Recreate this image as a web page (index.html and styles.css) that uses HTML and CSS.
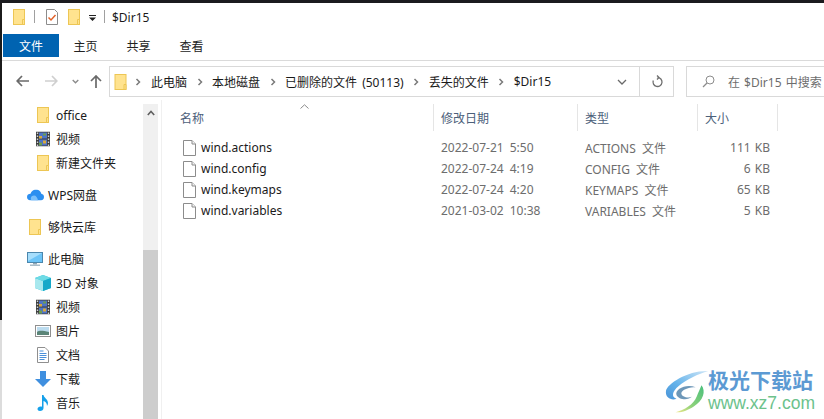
FILE: index.html
```html
<!DOCTYPE html>
<html lang="zh-CN">
<head>
<meta charset="utf-8">
<title>$Dir15</title>
<link rel="stylesheet" href="styles.css">
</head>
<body>
<svg class="defs" width="0" height="0" aria-hidden="true">
  <defs>
    <symbol id="folder" viewBox="0 0 12 16">
      <rect x=".5" y=".5" width="11" height="15" fill="#ffe38f" stroke="#edc654"/>
      <path d="M9.5 10.5h2v5h-2z" fill="#ffe38f" stroke="#edc654"/>
    </symbol>
    <symbol id="film" viewBox="0 0 14 15">
      <rect width="14" height="15" fill="#3d3d3d"/>
      <path d="M.8 1h1.4v1.6H.8zM.8 4h1.4v1.6H.8zM.8 7h1.4v1.6H.8zM.8 10h1.4v1.6H.8zM.8 13h1.4v1.4H.8zM11.8 1h1.4v1.6h-1.4zM11.8 4h1.4v1.6h-1.4zM11.8 7h1.4v1.6h-1.4zM11.8 10h1.4v1.6h-1.4zM11.8 13h1.4v1.4h-1.4z" fill="#cfd3d6"/>
      <rect x="3" y="1" width="8" height="6" fill="#4f74c8"/>
      <rect x="3" y="8" width="8" height="6" fill="#4f74c8"/>
      <path d="M3 4.500h3v2.500H3zM7 9h3v3H7z" fill="#d9a93a"/>
      <path d="M7 2h3v2H7zM3 11h3v3H3z" fill="#6d9e4f"/>
    </symbol>
    <symbol id="cloud" viewBox="0 0 17 11">
      <path d="M4 11C1.500 11 0 9.500 0 7.500S1.500 4.300 3.500 4.300C4.300 1.700 6.500 0 9 0c2.800 0 4.800 1.800 5.300 4.300C16 4.600 17 5.900 17 7.500 17 9.500 15.500 11 13.500 11z" fill="#2c8ff0"/>
      <path d="M4.500 11C3 9 4 6 7 6c2 0 3.500 2 4 5z" fill="#7cc0fa"/>
    </symbol>
    <symbol id="pc" viewBox="0 0 16 14">
      <rect x=".5" y=".5" width="15" height="10" fill="#6cc4f7" stroke="#4b87ad"/>
      <path d="M1 1h14L1 9z" fill="#a6defc"/>
      <rect x="6" y="11" width="4" height="1.500" fill="#8fa6b5"/>
      <rect x="3" y="12.500" width="10" height="1.500" fill="#a9bcc8"/>
    </symbol>
    <symbol id="cube" viewBox="0 0 16 16">
      <path d="M8 0l8 3v10l-8 3-8-3V3z" fill="#2cc0d8"/>
      <path d="M0 3l8 3v10l-8-3z" fill="#a8e8ee"/>
      <path d="M8 0l8 3-8 3-8-3z" fill="#6fdbe5"/>
      <path d="M8 6l8-3v10l-8 3z" fill="#17a9c9"/>
    </symbol>
    <symbol id="pic" viewBox="0 0 16 12">
      <rect x=".5" y=".5" width="15" height="11" fill="#fff" stroke="#8f8f8f"/>
      <rect x="2" y="2" width="12" height="8" fill="#bcdcef"/>
      <path d="M2 7c3-2 6-1 12 0v3H2z" fill="#5b8578"/>
    </symbol>
    <symbol id="doc" viewBox="0 0 12 16">
      <path d="M.5.500h7.500l3.500 3.500v11.500H.5z" fill="#fff" stroke="#8f8f8f"/>
      <path d="M2.500 4h4M2.500 6.500h7M2.500 8.500h7M2.500 10.500h7M2.500 12.500h5" stroke="#4a90d9" fill="none"/>
    </symbol>
    <symbol id="down" viewBox="0 0 16 16">
      <path d="M5 0h6v8h5l-8 8-8-8h5z" fill="#3f8fdf"/>
    </symbol>
    <symbol id="note" viewBox="0 0 12 16">
      <path d="M5 0h1.500c.5 3 4.500 4 4.500 8 0 1-.3 2-1 3 .2-3-2-4.500-3.500-5v7c0 2-1.500 3-3.500 3C1.500 16 .5 15 .5 14c0-1.500 1.500-2.500 3-2.500.6 0 1 .1 1.500.3z" fill="#15a0ea"/>
    </symbol>
    <symbol id="file" viewBox="0 0 13 16">
      <path d="M.5.500h8.500l3.500 3.500v11.500H.5z" fill="#fff" stroke="#8c8c8c"/>
      <path d="M9 .5v3.500h3.500" fill="#f3f3f3" stroke="#8c8c8c"/>
    </symbol>
    <symbol id="crumb" viewBox="0 0 6 8">
      <path d="M1.500 1l3 3-3 3" fill="none" stroke="#7a7a7a" stroke-width="1.500"/>
    </symbol>
  </defs>
</svg>

<div class="frame">
  <div class="edge"><div class="edge-dark"></div><div class="edge-light"></div></div>
  <div class="window">
    <header class="titlebar">
      <svg class="ic-folder"><use href="#folder"/></svg>
      <span class="qsep"></span>
      <svg class="ic-check" viewBox="0 0 12 16">
        <path d="M.5.500h8l3 3v12H.5z" fill="#fff" stroke="#8c8c8c"/>
        <path d="M2.500 8.500l2.500 2.500 4.500-5" fill="none" stroke="#e2622a" stroke-width="1.500"/>
      </svg>
      <svg class="ic-folder second"><use href="#folder"/></svg>
      <svg class="ic-qat" viewBox="0 0 7 6"><path d="M0 0h7v1H0zM0 2.500h7L3.500 6z" fill="#222"/></svg>
      <span class="qsep tight"></span>
      <span class="wintitle">$Dir15</span>
    </header>

    <nav class="tabs">
      <span class="tab tab-file">文件</span>
      <span class="tab">主页</span>
      <span class="tab">共享</span>
      <span class="tab">查看</span>
    </nav>

    <div class="addrrow">
      <svg class="nav-back" viewBox="0 0 13 12"><path d="M6 1L1.200 6 6 11M1.500 6H13" fill="none" stroke="#6a6a6a" stroke-width="1.700"/></svg>
      <svg class="nav-fwd" viewBox="0 0 13 12"><path d="M7 1l4.800 5L7 11M11.500 6H0" fill="none" stroke="#cfcfcf" stroke-width="1.700"/></svg>
      <svg class="nav-drop" viewBox="0 0 7 5"><path d="M.7 1l2.800 2.800L6.300 1" fill="none" stroke="#8a8a8a" stroke-width="1.300"/></svg>
      <svg class="nav-up" viewBox="0 0 12 13"><path d="M1 6l5-5 5 5M6 1.500V13" fill="none" stroke="#6a6a6a" stroke-width="1.700"/></svg>
      <div class="addrbox">
        <svg class="ic-addr"><use href="#folder"/></svg>
        <svg class="crumb first"><use href="#crumb"/></svg>
        <span>此电脑</span>
        <svg class="crumb"><use href="#crumb"/></svg>
        <span>本地磁盘</span>
        <svg class="crumb"><use href="#crumb"/></svg>
        <span>已删除的文件 (50113)</span>
        <svg class="crumb"><use href="#crumb"/></svg>
        <span>丢失的文件</span>
        <svg class="crumb"><use href="#crumb"/></svg>
        <span>$Dir15</span>
        <svg class="addr-drop" viewBox="0 0 10 6"><path d="M1 1l4 4 4-4" fill="none" stroke="#6a6a6a" stroke-width="1.300"/></svg>
        <div class="refresh">
          <svg class="ic-refresh" viewBox="0 0 12 13"><path d="M6.500 2.500A4.500 4.500 0 1 1 2.300 5.400M6 .5l2 2-2 2" fill="none" stroke="#6e6e6e" stroke-width="1.300"/></svg>
        </div>
      </div>
      <div class="searchbox">
        <svg class="ic-search" viewBox="0 0 13 13"><circle cx="8" cy="5" r="4" fill="none" stroke="#8c8c8c"/><path d="M5 8l-4 4" stroke="#8c8c8c" stroke-width="1.200"/></svg>
        <span class="searchtext">在 $Dir15 中搜索</span>
      </div>
    </div>

    <main class="body">
      <aside class="sidebar">
        <ul class="tree">
          <li class="node sub"><svg class="i12"><use href="#folder"/></svg>office</li>
          <li class="node sub"><svg class="i14"><use href="#film"/></svg>视频</li>
          <li class="node sub"><svg class="i12"><use href="#folder"/></svg>新建文件夹</li>
          <li class="node top gap"><svg class="i-cloud"><use href="#cloud"/></svg>WPS网盘</li>
          <li class="node top gap"><svg class="i12"><use href="#folder"/></svg>够快云库</li>
          <li class="node top gap"><svg class="i-pc"><use href="#pc"/></svg>此电脑</li>
          <li class="node sub"><svg class="i16"><use href="#cube"/></svg>3D 对象</li>
          <li class="node sub"><svg class="i14"><use href="#film"/></svg>视频</li>
          <li class="node sub"><svg class="i-pic"><use href="#pic"/></svg>图片</li>
          <li class="node sub"><svg class="i12"><use href="#doc"/></svg>文档</li>
          <li class="node sub"><svg class="i16"><use href="#down"/></svg>下载</li>
          <li class="node sub"><svg class="i12"><use href="#note"/></svg>音乐</li>
        </ul>
        <div class="scrollbar">
          <div class="track"><svg class="scroll-up" viewBox="0 0 8 6"><path d="M.8 5L4 1.500 7.200 5" fill="none" stroke="#606060" stroke-width="1.600"/></svg></div>
          <div class="thumb"></div>
        </div>
      </aside>
      <section class="files">
        <div class="colhead">
          <span class="cell name">名称<svg class="sort" viewBox="0 0 9 5"><path d="M.5 4.500L4.500.8l4 3.700" fill="none" stroke="#8a8a8a"/></svg></span>
          <span class="cell">修改日期</span>
          <span class="cell">类型</span>
          <span class="cell">大小</span>
          <span class="cell tail"></span>
        </div>
        <div class="row">
          <span class="fname"><svg class="ic-file"><use href="#file"/></svg>wind.actions</span>
          <span class="meta">2022-07-21 5:50</span><span class="meta">ACTIONS 文件</span><span class="meta size">111 KB</span>
        </div>
        <div class="row">
          <span class="fname"><svg class="ic-file"><use href="#file"/></svg>wind.config</span>
          <span class="meta">2022-07-24 4:19</span><span class="meta">CONFIG 文件</span><span class="meta size">6 KB</span>
        </div>
        <div class="row">
          <span class="fname"><svg class="ic-file"><use href="#file"/></svg>wind.keymaps</span>
          <span class="meta">2022-07-24 4:20</span><span class="meta">KEYMAPS 文件</span><span class="meta size">65 KB</span>
        </div>
        <div class="row">
          <span class="fname"><svg class="ic-file"><use href="#file"/></svg>wind.variables</span>
          <span class="meta">2021-03-02 10:38</span><span class="meta">VARIABLES 文件</span><span class="meta size">5 KB</span>
        </div>
      </section>
    </main>
  </div>
</div>

<div class="watermark">
  <svg class="wm-logo" viewBox="0 0 48 48">
    <defs>
      <linearGradient id="wmblue" x1="1" y1="0" x2="0" y2="1"><stop offset="0" stop-color="#cfe6f7"/><stop offset=".6" stop-color="#63b2ea"/><stop offset="1" stop-color="#4a94d8"/></linearGradient>
      <linearGradient id="wmgreen" x1="1" y1="0" x2="0" y2="1"><stop offset="0" stop-color="#49bf7c"/><stop offset=".6" stop-color="#8ed27a"/><stop offset="1" stop-color="#f2e88a"/></linearGradient>
    </defs>
    <path d="M45 1C25 0 2 14 1 22c-1 8 7 10 11 8-6-2-4-8 2-13C22 10 35 4 45 1z" fill="url(#wmblue)"/>
    <path d="M32 18c-10-4-22 2-20 8 2 5 12 6 16 2-4 2-11 0-11-4 1-4 9-6 15-6z" fill="#6d97b8"/>
    <path d="M38 16c5 6 2 16-8 22-6 4-14 7-19 6 9-2 19-8 22-16 2-5 4-9 5-12z" fill="url(#wmgreen)"/>
  </svg>
  <div class="wm-text">
    <span class="wm-cn">极光下载站</span>
    <span class="wm-url">www.xz7.com</span>
  </div>
</div>
</body>
</html>
```

FILE: styles.css
```css
* { box-sizing: border-box; }
html, body { margin: 0; height: 100%; overflow: hidden; background: #fff; }
body {
  font-family: "Noto Sans", "Noto Sans CJK SC", sans-serif;
  font-size: 12px;
  color: #1a1a1a;
  position: relative;
}
.defs { position: absolute; }
svg { display: block; flex: none; }

.frame { display: flex; height: 419px; border-top: 3px solid #1b1b1f; }
.edge { width: 2px; display: flex; flex-direction: column; flex: none; }
.edge-dark { height: 317px; background: #1b1b1b; }
.edge-light { flex: 1; background: #dcdcdc; }
.window { flex: 1; min-width: 0; display: flex; flex-direction: column; }

/* title bar */
.titlebar { height: 31px; display: flex; align-items: center; padding: 0 0 4px 11px; }
.ic-folder { width: 12px; height: 16px; }
.ic-folder.second { margin-left: 10px; }
.qsep { width: 1px; height: 13px; background: #a0a0a0; margin: 0 11px 0 9px; }
.qsep.tight { margin: 0 7px 0 8px; }
.ic-check { width: 12px; height: 16px; }
.ic-qat { width: 7px; height: 6px; margin: 3px 0 0 9px; }
.wintitle { line-height: 16px; margin-top: 3px; }

/* ribbon tabs */
.tabs { height: 23px; display: flex; padding-left: 1px; }
.tab { width: 53px; display: flex; align-items: center; justify-content: center; color: #222; }
.tab-file { width: 56px; background: #0063b1; color: #fff; }

/* address row */
.addrrow {
  height: 40px;
  margin-top: 3px;
  border-top: 1px solid #dadada;
  display: flex;
  align-items: flex-start;
  padding: 5px 0 0 14px;
}
.nav-back { width: 13px; height: 12px; margin-top: 9px; }
.nav-fwd { width: 13px; height: 12px; margin: 9px 0 0 16px; }
.nav-drop { width: 7px; height: 5px; margin: 13px 0 0 14px; }
.nav-up { width: 12px; height: 13px; margin: 9px 0 0 11px; }
.addrbox {
  width: 565px;
  height: 31px;
  margin-left: 7px;
  border: 1px solid #d9d9d9;
  display: flex;
  align-items: center;
  padding-left: 4px;
  flex: none;
  word-spacing: 2px;
}
.ic-addr { width: 13px; height: 16px; }
.crumb { width: 6px; height: 8px; margin: 0 9.500px; }
.crumb.first { margin-left: 8px; margin-right: 10px; }
.addr-drop { width: 10px; height: 6px; margin-left: auto; margin-right: 12px; }
.refresh { width: 34px; height: 100%; border-left: 1px solid #d9d9d9; display: flex; align-items: center; justify-content: center; }
.ic-refresh { width: 12px; height: 13px; }
.searchbox {
  flex: 1;
  height: 31px;
  margin-left: 12px;
  margin-right: -2px;
  border: 1px solid #d9d9d9;
  display: flex;
  align-items: center;
  padding-left: 15px;
}
.ic-search { width: 13px; height: 13px; }
.searchtext { margin-left: 13px; color: #6d6d6d; white-space: nowrap; word-spacing: 1px; }

/* body */
.body { flex: 1; min-height: 0; display: flex; }
.sidebar { width: 160px; flex: none; display: flex; border-right: 1px solid #f0f0f0; }
.tree { list-style: none; margin: 0; padding: 3px 0 0; flex: 1; min-width: 0; }
.node { height: 24px; display: flex; align-items: center; white-space: nowrap; position: relative; }
.node.gap { margin-top: 8px; }
.node.sub { padding-left: 54px; }
.node.top { padding-left: 46px; }
.node svg { position: absolute; top: 50%; transform: translateY(-50%); }
.node.sub svg { left: 33px; }
.node.top svg { left: 25px; }
.i12 { width: 12px; height: 16px; }
.i14 { width: 14px; height: 15px; }
.i16 { width: 16px; height: 16px; }
.i-cloud { width: 17px; height: 11px; }
.i-pc { width: 16px; height: 14px; }
.i-pic { width: 16px; height: 12px; }
.node.sub .i12 { left: 35px; }
.node.top .i12 { left: 27px; }
.node.top .i-cloud { left: 25px; }
.node.sub .i14 { left: 34px; }

.scrollbar { width: 15px; flex: none; display: flex; flex-direction: column; margin: 4px 3px 0 0; }
.track { height: 146px; background: #f0f0f0; padding: 6px 0 0 4px; }
.scroll-up { width: 8px; height: 6px; }
.thumb { flex: 1; background: #cdcdcd; }

/* file list */
.files { flex: 1; min-width: 0; padding: 4px 0 0 10px; }
.colhead { display: grid; grid-template-columns: 262px 144px 120px 80px 40px; height: 27px; }
.cell {
  border-right: 1px solid #e5e5e5;
  padding-left: 7px;
  display: flex;
  align-items: center;
  color: #4c607a;
  position: relative;
}
.cell.name { padding-left: 8px; }
.cell.tail { border-right: none; }
.sort { position: absolute; left: 128px; top: 0; width: 9px; height: 5px; }
.row {
  display: grid;
  grid-template-columns: 262px 144px 120px 72px;
  height: 21px;
  align-items: center;
}
.colhead + .row { margin-top: 6px; }
.fname { display: flex; align-items: center; padding-left: 11px; }
.ic-file { width: 13px; height: 16px; margin-right: 5px; }
.meta { padding-left: 7px; color: #6d6d6d; white-space: nowrap; word-spacing: 3px; }
.meta.size { text-align: right; padding: 0; word-spacing: 1px; }

/* watermark */
.watermark { position: absolute; left: 665px; top: 369px; width: 155px; display: flex; }
.wm-logo { width: 46px; height: 48px; }
.wm-text { display: flex; flex-direction: column; margin: -2px 0 0 -3px; }
.wm-cn { font-size: 21px; line-height: 26px; font-weight: 700; color: #5c9ad3; white-space: nowrap; }
.wm-url { font-family: "Liberation Sans", sans-serif; font-size: 17.500px; line-height: 20px; color: #6cc28c; }
```
